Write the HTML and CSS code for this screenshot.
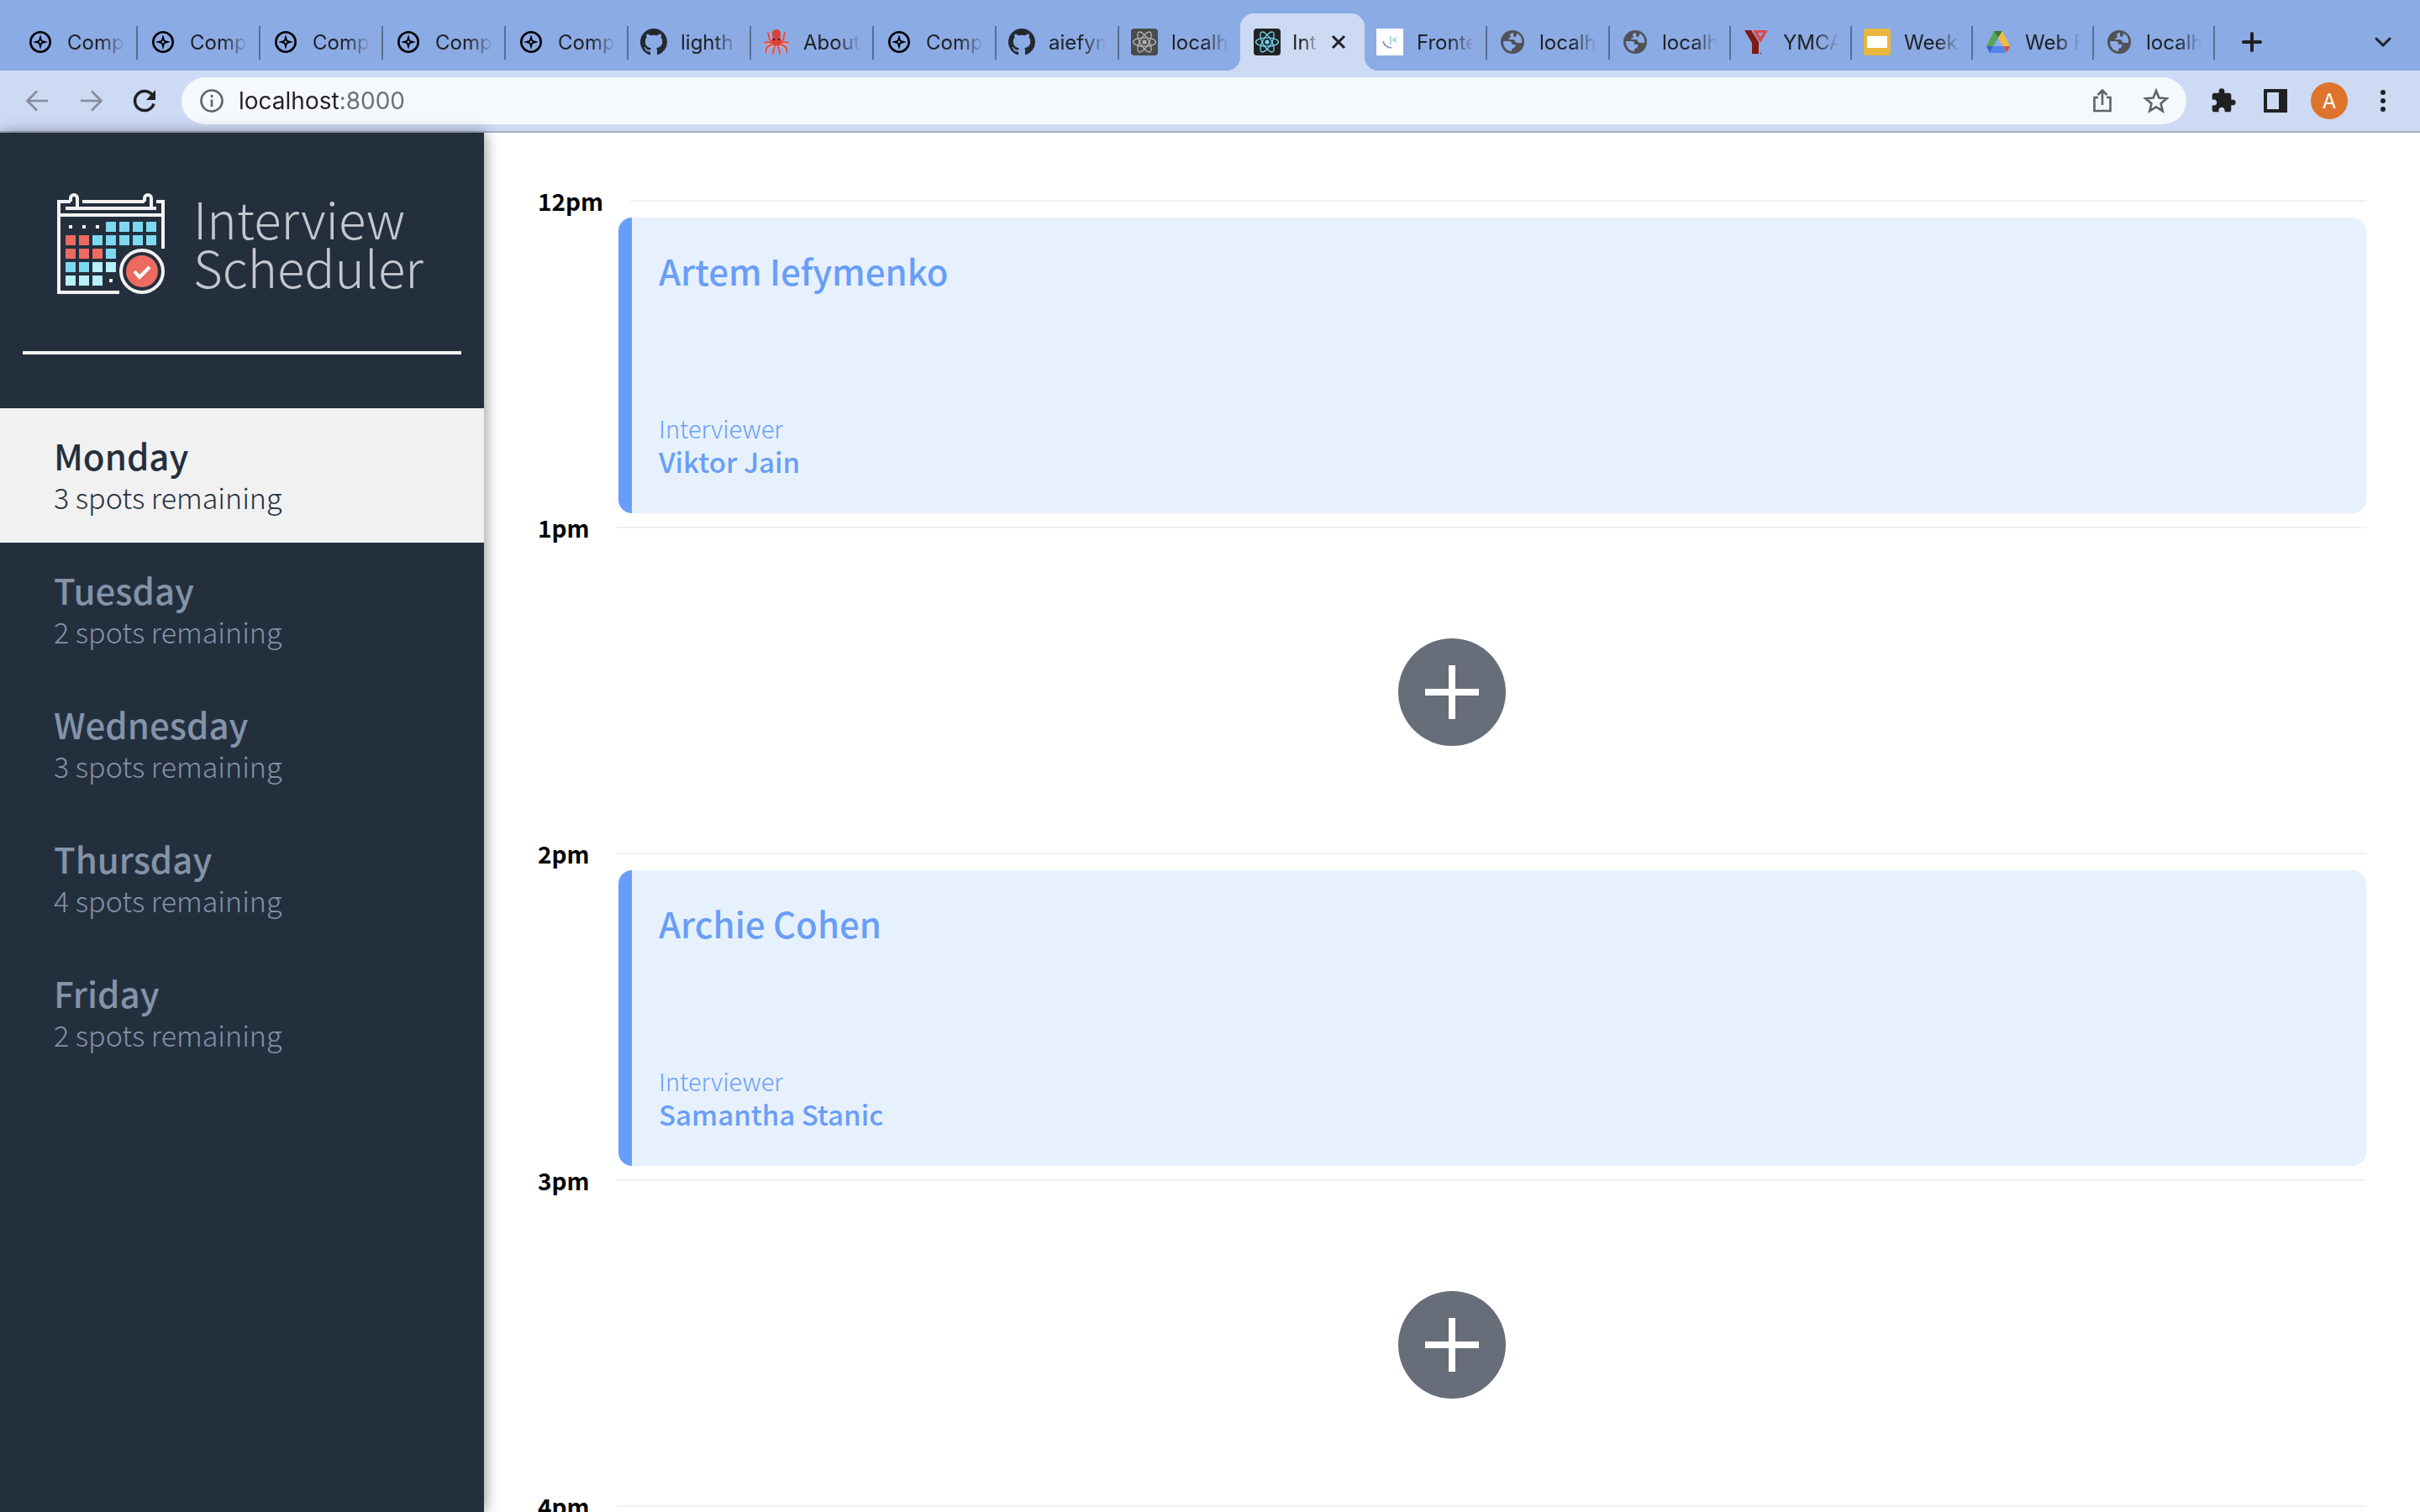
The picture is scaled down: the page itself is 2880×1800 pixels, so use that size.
FILE: index.html
```html
<!DOCTYPE html>
<html lang="en">
<head>
<meta charset="utf-8">
<title>Interview Scheduler</title>
<link rel="stylesheet" href="styles.css">
</head>
<body>
<svg class="sprite" aria-hidden="true">
  <symbol id="compass" viewBox="0 0 32 32">
    <circle cx="16" cy="16" r="11.7" fill="none" stroke="#000" stroke-width="2.6"/>
    <path fill="#000" fill-rule="evenodd" d="M16 7l2 7 7 2-7 2-2 7-2-7-7-2 7-2zM16 14.6a1.4 1.4 0 100 2.8 1.4 1.4 0 000-2.8z"/>
  </symbol>
  <symbol id="github" viewBox="0 0 16 16">
    <path fill="#24292f" d="M8 0C3.58 0 0 3.58 0 8c0 3.54 2.29 6.53 5.47 7.59.4.07.55-.17.55-.38 0-.19-.01-.82-.01-1.49-2.01.37-2.53-.49-2.69-.94-.09-.23-.48-.94-.82-1.13-.28-.15-.68-.52-.01-.53.63-.01 1.08.58 1.23.82.72 1.21 1.87.87 2.33.66.07-.52.28-.87.51-1.07-1.78-.2-3.64-.89-3.64-3.95 0-.87.31-1.59.82-2.15-.08-.2-.36-1.02.08-2.12 0 0 .67-.21 2.2.82.64-.18 1.32-.27 2-.27s1.36.09 2 .27c1.53-1.04 2.2-.82 2.2-.82.44 1.1.16 1.92.08 2.12.51.56.82 1.27.82 2.15 0 3.07-1.87 3.75-3.65 3.95.29.25.54.73.54 1.48 0 1.07-.01 1.93-.01 2.2 0 .21.15.46.55.38A8.01 8.01 0 0016 8c0-4.42-3.58-8-8-8z"/>
  </symbol>
  <symbol id="octopus" viewBox="0 0 32 32">
    <g fill="none" stroke="#f0a9a0" stroke-width="2.6" stroke-linecap="round">
      <path d="M12 16C5 16 9 9 6 6M20 16c7 0 3-7 6-10M11 18c-4-1-7-1-9 0M21 18c4-1 7-1 9 0M12 20c-6 1-8 4-7 8M20 20c6 1 8 4 7 8M14 20c1 4-2 6-2 10M18 20c-1 4 2 6 2 10"/>
    </g>
    <g fill="none" stroke="#dd4b41" stroke-width="1.900" stroke-linecap="round">
      <path d="M12 15C6 16 8 9 6 5M20 15c6 1 4-6 6-10M11 17c-4-1-7-1-9 0M21 17c4-1 7-1 9 0M12 19c-6 1-9 4-8 9M20 19c6 1 9 4 8 9M14 19c1 4-2 6-2 11M18 19c-1 4 2 6 2 11"/>
    </g>
    <path fill="#d94338" d="M16 1c4 0 5.500 3 5 6-.5 2.500-1 4 .5 7 1 4-2 6-5.500 6s-6.500-2-5.500-6c1.500-3 1-4.500.5-7-.5-3 1-6 5-6z"/>
    <circle cx="13" cy="13" r="1.200" fill="#401a18"/><circle cx="19" cy="13" r="1.200" fill="#401a18"/>
  </symbol>
  <symbol id="atom" viewBox="0 0 32 32">
    <g fill="none" stroke="currentColor" stroke-width="1.300">
      <ellipse cx="16" cy="16" rx="13.500" ry="5.200"/>
      <ellipse cx="16" cy="16" rx="13.500" ry="5.200" transform="rotate(60 16 16)"/>
      <ellipse cx="16" cy="16" rx="13.500" ry="5.200" transform="rotate(120 16 16)"/>
    </g>
    <circle cx="16" cy="16" r="2.600" fill="currentColor"/>
  </symbol>
  <symbol id="globe" viewBox="0 0 32 32">
    <circle cx="16" cy="16" r="14" fill="#505256"/>
    <path fill="#8babe5" d="M5 15h7c2 0 3 1 3 3 0 1 2 1 4 1 1 0 0 3-1 4-2 0-3 1-3 4C9 27 5 22 5 15zM17 5c-2 0-4 1-4 3 0 1 1 1 1 2s-2 1-3 2c0 1 1 1 2 1h4c2 0 2 3 4 4h6c1-6-3-11-6-11 0 3-1 4-3 4-1 0-1-3-1-5z"/>
  </symbol>
  <symbol id="ymca" viewBox="0 0 32 32">
    <path fill="#831a12" d="M2 2h8l9 14v14h-8V17z"/>
    <path fill="#dc4a4b" fill-rule="evenodd" d="M12 2h18l-9 15zM18 5l3 5 3-5z"/>
    <circle cx="21.500" cy="29.500" r=".8" fill="#831a12"/>
  </symbol>
  <symbol id="slides" viewBox="0 0 32 32">
    <rect width="32" height="32" rx="3" fill="#e8b73f"/><path fill="#fff" d="M4 9h24v14H4z"/>
  </symbol>
  <symbol id="drive" viewBox="0 0 32 32">
    <path fill="#54a557" d="M11 3h6l-1 8-6 10H2z"/>
    <path fill="#3a7b3c" d="M11 3h10l-5 8z"/>
    <path fill="#f0bd43" d="M21 3l9 18h-8l-6-10z"/>
    <path fill="#5384ec" d="M10 21h12l3 8H6z"/>
    <path fill="#3565cb" d="M2 21h8l-4 8z"/>
    <path fill="#d95140" d="M22 21h8l-4 8z"/>
  </symbol>
  <symbol id="frontend" viewBox="0 0 32 32">
    <path fill="#fff" d="M0 0h32v32H0z"/>
    <path fill="none" stroke="#8087c4" stroke-width="1.600" d="M8 15c1 4 4 7.500 10 8"/>
    <path fill="none" stroke="#93d3d8" stroke-width="1.600" d="M17 9v10M24 11l-4 2.500 4 2.500"/>
  </symbol>
</svg>

<header class="browser">
  <div class="tabstrip" role="tablist">
    <button class="tab" role="tab"><svg class="tab-icon"><use href="#compass"/></svg><span class="tab-title">Comp</span></button>
    <button class="tab" role="tab"><svg class="tab-icon"><use href="#compass"/></svg><span class="tab-title">Comp</span></button>
    <button class="tab" role="tab"><svg class="tab-icon"><use href="#compass"/></svg><span class="tab-title">Comp</span></button>
    <button class="tab" role="tab"><svg class="tab-icon"><use href="#compass"/></svg><span class="tab-title">Comp</span></button>
    <button class="tab" role="tab"><svg class="tab-icon"><use href="#compass"/></svg><span class="tab-title">Comp</span></button>
    <button class="tab" role="tab"><svg class="tab-icon"><use href="#github"/></svg><span class="tab-title">lighth</span></button>
    <button class="tab" role="tab"><svg class="tab-icon"><use href="#octopus"/></svg><span class="tab-title">About</span></button>
    <button class="tab" role="tab"><svg class="tab-icon"><use href="#compass"/></svg><span class="tab-title">Comp</span></button>
    <button class="tab" role="tab"><svg class="tab-icon"><use href="#github"/></svg><span class="tab-title">aiefym</span></button>
    <button class="tab tab-before-active" role="tab"><svg class="tab-icon tab-icon-storybook"><use href="#atom"/></svg><span class="tab-title">localh</span></button>
    <div class="tab tab-active" role="tab" aria-selected="true"><svg class="tab-icon tab-icon-react"><use href="#atom"/></svg><span class="tab-title">Int</span><button class="tab-close" aria-label="Close tab"><svg viewBox="0 0 18 18"><path d="M2 2l14 14M16 2L2 16"/></svg></button></div>
    <button class="tab" role="tab"><svg class="tab-icon"><use href="#frontend"/></svg><span class="tab-title">Fronte</span></button>
    <button class="tab" role="tab"><svg class="tab-icon"><use href="#globe"/></svg><span class="tab-title">localh</span></button>
    <button class="tab tab-narrow" role="tab"><svg class="tab-icon"><use href="#globe"/></svg><span class="tab-title">localh</span></button>
    <button class="tab tab-narrow" role="tab"><svg class="tab-icon"><use href="#ymca"/></svg><span class="tab-title">YMCA</span></button>
    <button class="tab tab-narrow" role="tab"><svg class="tab-icon"><use href="#slides"/></svg><span class="tab-title">Week</span></button>
    <button class="tab tab-narrow" role="tab"><svg class="tab-icon"><use href="#drive"/></svg><span class="tab-title">Web F</span></button>
    <button class="tab tab-narrow" role="tab"><svg class="tab-icon"><use href="#globe"/></svg><span class="tab-title">localh</span></button>
    <button class="strip-button new-tab" aria-label="New tab"><svg viewBox="0 0 32 32"><path stroke-width="4" d="M16 6v20M6 16h20"/></svg></button>
    <button class="strip-button tab-search" aria-label="Search tabs"><svg viewBox="0 0 32 32"><path stroke-width="3" d="M8 12l8 8 8-8"/></svg></button>
  </div>

  <div class="toolbar">
    <div class="nav-buttons">
      <button class="icon-button faded" aria-label="Back"><svg viewBox="0 0 32 32"><path class="line" d="M29 16H5M16 4.500L4.500 16 16 27.500"/></svg></button>
      <button class="icon-button faded" aria-label="Forward"><svg viewBox="0 0 32 32"><path class="line" d="M4 16h24M17 4.500L28.500 16 17 27.500"/></svg></button>
      <button class="icon-button" aria-label="Reload"><svg viewBox="0 0 32 32"><path class="line heavy" d="M25.500 9.500A11.500 11.500 0 1027 19.500"/><path class="solid" d="M29 3v12H18z"/></svg></button>
    </div>
    <div class="address">
      <button class="icon-button muted" aria-label="Site information"><svg viewBox="0 0 32 32"><circle class="line" cx="16" cy="16" r="12.500"/><path class="line" d="M16 14.500V23M16 9v3"/></svg></button>
      <input class="address-input" type="text" aria-label="Address" value="localhost:8000">
      <button class="icon-button muted" aria-label="Share"><svg viewBox="0 0 32 32"><path class="line" d="M11 12H6.500v16h19V12H21M16 21V4M10.500 9L16 3.500 21.500 9"/></svg></button>
      <button class="icon-button muted" aria-label="Bookmark"><svg viewBox="0 0 32 32"><path class="line" d="M16 4l3.400 8.600 9.200.700-7.100 5.900 2.300 9L16 23.300l-7.800 4.900 2.300-9-7.100-5.900 9.200-.700z"/></svg></button>
    </div>
    <div class="tools">
      <button class="icon-button" aria-label="Extensions"><svg viewBox="0 0 24 24"><path class="solid" d="M20.500 11H19V7c0-1.100-.9-2-2-2h-4V3.500a2.500 2.500 0 00-5 0V5H4c-1.100 0-1.990.9-1.990 2v3.800H3.500c1.490 0 2.700 1.210 2.700 2.700s-1.210 2.700-2.700 2.700H2V20c0 1.100.9 2 2 2h3.800v-1.500c0-1.490 1.210-2.700 2.700-2.700s2.700 1.210 2.700 2.700V22H17c1.100 0 2-.9 2-2v-4h1.500a2.500 2.500 0 000-5z"/></svg></button>
      <button class="icon-button" aria-label="Side panel"><svg viewBox="0 0 32 32"><path class="solid" fill-rule="evenodd" d="M2 2h28v28H2zM6 6v20h14V6z"/></svg></button>
      <button class="avatar" aria-label="Profile">A</button>
      <button class="icon-button" aria-label="Menu"><svg viewBox="0 0 32 32"><circle class="solid" cx="16" cy="6" r="3"/><circle class="solid" cx="16" cy="16" r="3"/><circle class="solid" cx="16" cy="26" r="3"/></svg></button>
    </div>
  </div>
</header>

<div class="app">
  <aside class="sidebar">
    <div class="brand">
      <svg class="brand-mark" viewBox="0 0 128 120" aria-hidden="true">
        <g fill="none" stroke="#f2f2f2" stroke-width="4">
          <path d="M74 118H2V10h14M30 10h74M118 10h8v56M10 18h108M2 26h124"/>
          <path d="M16 10V6a4 4 0 018 0v12M104 10V6a4 4 0 018 0v12"/>
          <circle cx="101" cy="93" r="25"/>
        </g>
        <path fill="#7dd9ef" d="M58 34h12v12H58zM74 34h12v12H74zM90 34h12v12H90zM106 34h12v12h-12zM42 50h12v12H42zM58 50h12v12H58zM74 50h12v12H74zM90 50h12v12H90zM106 50h12v12h-12zM58 66h12v12H58zM10 82h12v12H10zM26 82h12v12H26z"/>
        <path fill="#ed6a61" d="M10 50h12v12H10zM26 50h12v12H26zM10 66h12v12H10zM26 66h12v12H26zM42 66h12v12H42z"/>
        <path fill="#b8f0fa" d="M42 82h12v12H42zM58 82h12v12H58zM10 98h12v12H10zM26 98h12v12H26zM42 98h12v12H42z"/>
        <path fill="#f2f2f2" d="M14 38h4v4h-4zM30 38h4v4h-4zM46 38h4v4h-4zM62 102h4v4h-4z"/>
        <circle cx="101" cy="93" r="19" fill="#ed6a61"/>
        <path fill="none" stroke="#fff" stroke-width="4" d="M92 93l6 7 12-12"/>
      </svg>
      <div class="brand-name">Interview<br>Scheduler</div>
    </div>
    <hr class="divider">
    <nav class="days">
      <button class="day day-selected"><span class="day-name">Monday</span><span class="day-spots">3 spots remaining</span></button>
      <button class="day"><span class="day-name">Tuesday</span><span class="day-spots">2 spots remaining</span></button>
      <button class="day"><span class="day-name">Wednesday</span><span class="day-spots">3 spots remaining</span></button>
      <button class="day"><span class="day-name">Thursday</span><span class="day-spots">4 spots remaining</span></button>
      <button class="day"><span class="day-name">Friday</span><span class="day-spots">2 spots remaining</span></button>
    </nav>
  </aside>

  <main class="schedule">
    <section class="slot">
      <header class="slot-time"><h2>12pm</h2></header>
      <article class="card">
        <h3 class="student">Artem Iefymenko</h3>
        <div><h4 class="role">Interviewer</h4><p class="interviewer">Viktor Jain</p></div>
      </article>
    </section>
    <section class="slot">
      <header class="slot-time"><h2>1pm</h2></header>
      <div class="empty"><button class="add" aria-label="Add"><svg viewBox="0 0 128 128"><path d="M64 32v64M32 64h64"/></svg></button></div>
    </section>
    <section class="slot">
      <header class="slot-time"><h2>2pm</h2></header>
      <article class="card">
        <h3 class="student">Archie Cohen</h3>
        <div><h4 class="role">Interviewer</h4><p class="interviewer">Samantha Stanic</p></div>
      </article>
    </section>
    <section class="slot">
      <header class="slot-time"><h2>3pm</h2></header>
      <div class="empty"><button class="add" aria-label="Add"><svg viewBox="0 0 128 128"><path d="M64 32v64M32 64h64"/></svg></button></div>
    </section>
    <section class="slot">
      <header class="slot-time"><h2>4pm</h2></header>
      <div class="empty"></div>
    </section>
  </main>
</div>
</body>
</html>
```
FILE: styles.css
```css
* { box-sizing: border-box; margin: 0; padding: 0; }

body {
  display: flex;
  flex-direction: column;
  height: 100vh;
  overflow: hidden;
  background: #fff;
  font-family: "Noto Sans CJK JP", sans-serif;
}

button { border: 0; background: none; color: inherit; font: inherit; cursor: pointer; }
.sprite { display: none; }

/* Browser frame */
.browser { font-family: Inter, sans-serif; color: #202124; }

.tabstrip {
  display: flex;
  align-items: flex-end;
  height: 84px;
  padding: 0 28px 0 18px;
  background: #8babe5;
}

.tab {
  position: relative;
  display: flex;
  flex: 0 0 146px;
  align-items: center;
  gap: 16px;
  min-width: 0;
  height: 68px;
  padding: 0 16px 0 14px;
  font-size: 24px;
  text-align: left;
}
.tab-narrow { flex-basis: 144px; }

.tab::after {
  content: "";
  position: absolute;
  top: 15px;
  right: 0;
  width: 2px;
  height: 40px;
  background: #5a6c92;
}
.tab-before-active::after { display: none; }

.tab-icon { flex: none; width: 32px; height: 32px; }
.tab-icon-storybook { border-radius: 4px; background: #4b4b4b; color: #b5b5b5; }
.tab-icon-react { border-radius: 4px; background: #222; color: #70d7f4; }

.tab-title {
  flex: 1;
  min-width: 0;
  overflow: hidden;
  white-space: nowrap;
  mask-image: linear-gradient(to left, transparent, #000 28px);
}

.tab-active {
  gap: 14px;
  padding-right: 22px;
  border-radius: 16px 16px 0 0;
  background: #cddaf4;
  box-shadow: -2px 0 #cddaf4;
}
.tab-active::before,
.tab-active::after {
  content: "";
  position: absolute;
  top: auto;
  bottom: 0;
  width: 16px;
  height: 16px;
}
.tab-active::before { left: -18px; background: radial-gradient(circle at 0 0, #8babe5 16px, #cddaf4 16px); }
.tab-active::after { right: -16px; background: radial-gradient(circle at 100% 0, #8babe5 16px, #cddaf4 16px); }
.tab-active .tab-title { mask-image: linear-gradient(to left, transparent, #000 20px); }

.tab-close { flex: none; width: 18px; height: 18px; }
.tab-close svg { display: block; fill: none; stroke: #202124; stroke-width: 3; }

.strip-button { width: 32px; height: 68px; }
.strip-button svg { display: block; width: 32px; height: 32px; fill: none; stroke: #202124; stroke-linecap: round; }
.new-tab { margin-left: 28px; }
.tab-search { margin-left: auto; }

.toolbar {
  display: flex;
  align-items: center;
  gap: 28px;
  height: 74px;
  padding: 0 28px;
  border-bottom: 2px solid #a5b0c6;
  background: #cddaf4;
}
.nav-buttons { display: flex; align-items: center; gap: 32px; }
.tools { display: flex; align-items: center; gap: 30px; }

.icon-button { flex: none; width: 32px; height: 32px; color: #202124; }
.icon-button svg { display: block; width: 32px; height: 32px; }
.faded { color: #858c9d; }
.muted { color: #5f6368; }
.line { fill: none; stroke: currentColor; stroke-width: 2.6px; }
.heavy { stroke-width: 3.5px; }
.solid { fill: currentColor; }

.address {
  display: flex;
  flex: 1;
  align-items: center;
  gap: 32px;
  height: 56px;
  padding: 0 20px;
  border-radius: 28px;
  background: #f5f8fc;
}
.address-input {
  flex: 1;
  min-width: 0;
  margin-left: -16px;
  border: 0;
  outline: 0;
  background: linear-gradient(90deg, #202124 122px, #6a6d72 122px);
  background-clip: text;
  color: transparent;
  font: 28px Inter, sans-serif;
}
.avatar {
  width: 44px;
  height: 44px;
  margin: 0 -4px;
  border-radius: 50%;
  background: #de742c;
  color: #fff;
  font-size: 24px;
}

/* Scheduler */
.app { display: flex; flex: 1; min-height: 0; }

.sidebar {
  z-index: 1;
  flex: 0 0 20%;
  background: #242f3e;
  box-shadow: 2px 0 16px rgba(0, 0, 0, 0.4);
}
.brand {
  display: flex;
  align-items: center;
  gap: 34px;
  height: 260px;
  padding: 0 0 0 68px;
}
.brand-mark { flex: none; width: 128px; height: 120px; margin-top: 4px; }
.brand-name { color: #c4c8cd; font-size: 60px; font-weight: 300; line-height: 58px; }

.divider { height: 4px; margin: 0 27px 64px; border: 0; background: #f2f2f2; }

.day {
  display: block;
  width: 100%;
  height: 160px;
  padding: 0 64px;
  color: #8393a8;
  text-align: left;
}
.day-selected { background: #f1f1f1; color: #242f3e; }
.day-name, .day-spots { display: block; }
.day-name { font-size: 42px; font-weight: 500; line-height: 52px; }
.day-spots { font-size: 34px; font-weight: 300; line-height: 48px; }

.schedule {
  flex: 1;
  min-width: 0;
  padding: 64px;
  overflow-y: auto;
  scrollbar-width: none;
}
.slot-time { display: flex; gap: 32px; height: 37px; }
.slot-time h2 { color: #000; font-size: 28px; font-weight: 700; line-height: 35px; }
.slot-time::after { content: ""; flex: 1; height: 2px; margin-top: 16px; background: #f1f1f1; }

.card {
  display: flex;
  flex-direction: column;
  justify-content: space-between;
  height: 352px;
  margin-left: 96px;
  padding: 32px 32px 40px;
  border-left: 16px solid #699ef8;
  border-radius: 16px;
  background: #e7f1fe;
  color: #699ef8;
}
.student { font-size: 42px; font-weight: 500; line-height: 62px; }
.role { font-size: 29px; font-weight: 300; line-height: 36px; }
.interviewer { font-size: 33px; font-weight: 500; line-height: 44px; }

.empty { display: flex; align-items: center; justify-content: center; height: 351px; }
.add { width: 128px; height: 128px; border-radius: 50%; background: #676e79; }
.add svg { display: block; fill: none; stroke: #fff; stroke-width: 8; }
```
